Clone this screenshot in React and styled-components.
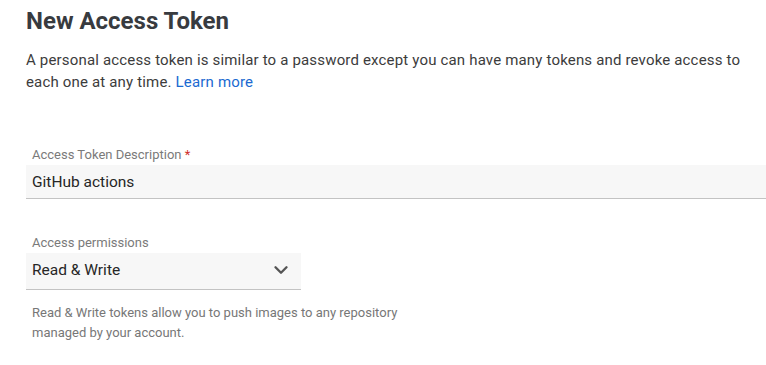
import React from "react";
import styled, { createGlobalStyle } from "styled-components";
import { ChevronDown } from "lucide-react";

const GlobalStyle = createGlobalStyle`
  body {
    margin: 0;
    background: #fff;
    font-family: Roboto, "Liberation Sans", Arial, sans-serif;
  }
`;

const Page = styled.div`
  padding: 7px 0 0 26px;
`;

const Title = styled.h1`
  margin: 0;
  font-size: 24px;
  line-height: 28px;
  font-weight: 700;
  color: #383b3f;
`;

const Intro = styled.p`
  margin: 14px 0 0;
  max-width: 728px;
  font-size: 15px;
  line-height: 22px;
  letter-spacing: 0.17px;
  color: #3c3c3c;
`;

const Link = styled.a`
  color: #1b6ad1;
  text-decoration: none;
`;

const Field = styled.div`
  display: flex;
  flex-direction: column;
  margin-top: ${(p) => p.$gap}px;
  width: ${(p) => p.$width || "auto"};
`;

const Label = styled.label`
  padding-left: 6px;
  margin-bottom: 2px;
  font-size: 13px;
  line-height: 16px;
  color: #7a7a7a;
`;

const Required = styled.span`
  color: #d0312d;
`;

const Box = styled.div`
  display: flex;
  align-items: center;
  justify-content: space-between;
  height: 33px;
  box-sizing: content-box;
  padding: 0 9px ${(p) => (p.$select ? 3 : 0)}px 6px;
  background: #f7f7f7;
  border-bottom: 1px solid #c3c3c3;
  font-size: 15.5px;
  color: #262626;
`;

const BoxText = styled.span`
  line-height: 20px;
`;

const Helper = styled.p`
  margin: 13px 0 0;
  padding-left: 6px;
  max-width: 380px;
  font-size: 13px;
  line-height: 20px;
  color: #777;
`;

export default function App() {
  return (
    <>
      <GlobalStyle />
      <Page>
        <Title>New Access Token</Title>
        <Intro>
          A personal access token is similar to a password except you can have many tokens and
          revoke access to each one at any time. <Link href="#">Learn more</Link>
        </Intro>

        <Field $gap={54}>
          <Label>
            Access Token Description <Required>*</Required>
          </Label>
          <Box>
            <BoxText>GitHub actions</BoxText>
          </Box>
        </Field>

        <Field $gap={36} $width="275px">
          <Label>Access permissions</Label>
          <Box $select>
            <BoxText>Read &amp; Write</BoxText>
            <ChevronDown size={22} strokeWidth={2.6} color="#555" />
          </Box>
        </Field>
        <Helper>
          Read &amp; Write tokens allow you to push images to any repository managed by your
          account.
        </Helper>
      </Page>
    </>
  );
}
